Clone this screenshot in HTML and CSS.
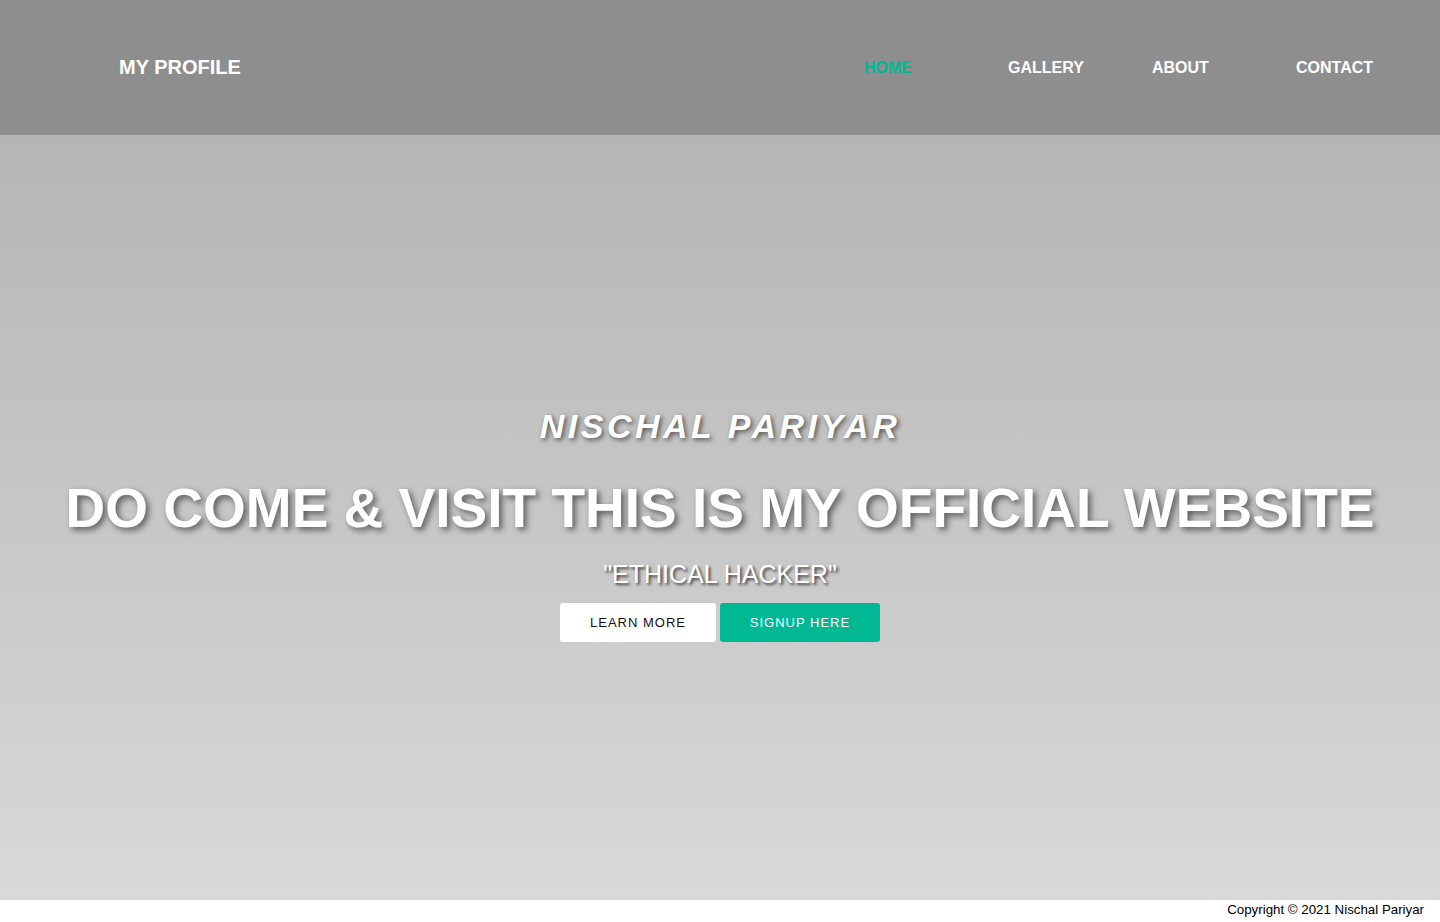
FILE: index.html
```html
<!DOCTYPE html>
<html lang="en">
<head>
<meta charset="utf-8">
<title>My Profile</title>
<link rel="stylesheet" href="styles.css">
</head>
<body>
<header class="topbar">
  <div class="brand">MY PROFILE</div>
  <nav class="menu">
    <a class="menu-item active" href="#">HOME</a>
    <a class="menu-item" href="#">GALLERY</a>
    <a class="menu-item" href="#">ABOUT</a>
    <a class="menu-item" href="#">CONTACT</a>
  </nav>
</header>
<main class="hero">
  <div class="hero-content">
    <h3 class="hero-name">NISCHAL PARIYAR</h3>
    <h1 class="hero-title">DO COME &amp; VISIT THIS IS MY OFFICIAL WEBSITE</h1>
    <p class="hero-sub">"ETHICAL HACKER"</p>
    <div class="hero-actions">
      <a class="btn btn-light" href="#">LEARN MORE</a>
      <a class="btn btn-green" href="#">SIGNUP HERE</a>
    </div>
  </div>
</main>
<footer class="footer">Copyright © 2021 Nischal Pariyar</footer>
</body>
</html>
```
FILE: styles.css
```css
* { box-sizing: border-box; }
html, body { margin: 0; padding: 0; }
body {
  font-family: "Liberation Sans", Arial, sans-serif;
  background: #fff;
  width: 1440px;
  height: 922px;
  overflow: hidden;
}
.topbar {
  height: 135px;
  background: #8e8e8e;
  display: flex;
  align-items: center;
  justify-content: space-between;
  padding-left: 119px;
}
.brand {
  color: #fff;
  font-size: 20px;
  font-weight: bold;
}
.menu {
  display: grid;
  grid-template-columns: repeat(4, 144px);
}
.menu-item {
  color: #fff;
  font-size: 16px;
  font-weight: bold;
  text-decoration: none;
}
.menu-item.active { color: #00b894; }
.hero {
  height: 765px;
  background: linear-gradient(to bottom, #b5b5b5, #d9d9d9);
  display: flex;
  align-items: center;
  justify-content: center;
  padding-top: 13px;
}
.hero-content {
  display: flex;
  flex-direction: column;
  align-items: center;
  color: #fff;
  text-align: center;
}
.hero-name {
  margin: 0;
  font-size: 34px;
  font-style: italic;
  font-weight: bold;
  letter-spacing: 3.5px;
  text-shadow: 2px 2px 5px rgba(0,0,0,0.6);
  line-height: 38px;
}
.hero-title {
  margin: 32px 0 0;
  font-size: 55px;
  font-weight: bold;
  line-height: 62px;
  text-shadow: 3px 3px 6px rgba(0,0,0,0.55);
}
.hero-sub {
  margin: 21px 0 0;
  font-size: 25px;
  line-height: 28px;
  text-shadow: 2px 2px 3px rgba(0,0,0,0.7);
}
.hero-actions {
  margin-top: 15px;
  display: flex;
  gap: 4px;
}
.btn {
  display: flex;
  align-items: center;
  justify-content: center;
  height: 39px;
  font-size: 13px;
  letter-spacing: 1px;
  text-decoration: none;
  border-radius: 3px;
}
.btn-light { width: 156px; background: #fff; color: #111; }
.btn-green { width: 160px; background: #00b894; color: #fff; }
.footer {
  height: 22px;
  text-align: right;
  padding-right: 16px;
  font-size: 13.3px;
  line-height: 20px;
  color: #000;
}
```
